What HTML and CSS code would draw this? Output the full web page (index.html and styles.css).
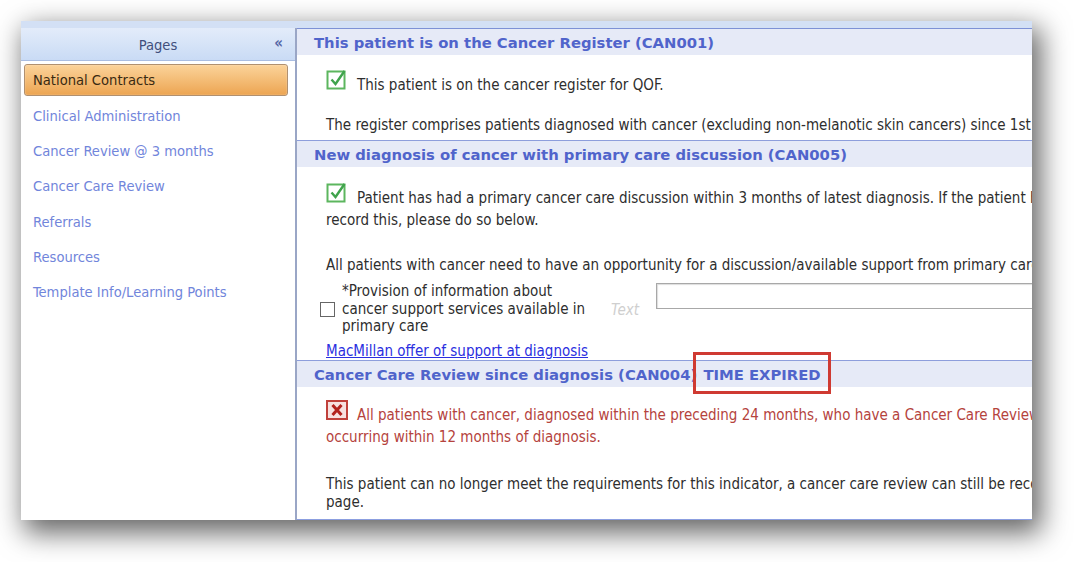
FILE: index.html
```html
<!DOCTYPE html>
<html lang="en">
<head>
    <meta charset="UTF-8">
    <title>National Contracts - Cancer</title>
    <link rel="stylesheet" href="styles.css">
</head>
<body>
    <div class="frame">
        <div class="topband"></div>
        <div class="panes">
            <aside class="sidebar">
                <div class="side-head">
                    <span class="side-title">Pages</span>
                    <span class="collapse">&laquo;</span>
                </div>
                <ul class="nav">
                    <li class="active">National Contracts</li>
                    <li>Clinical Administration</li>
                    <li>Cancer Review @ 3 months</li>
                    <li>Cancer Care Review</li>
                    <li>Referrals</li>
                    <li>Resources</li>
                    <li>Template Info/Learning Points</li>
                </ul>
            </aside>

            <main class="content">
                <section class="sec">
                    <div class="sec-head">This patient is on the Cancer Register (CAN001)</div>
                    <div class="sec-body body-1">
                        <div class="status">
                            <svg class="icon" width="22" height="22" viewBox="0 0 22 22">
                                <rect x="1.5" y="3.5" width="17" height="17" fill="#fff" stroke="#5cb65e" stroke-width="2"/>
                                <path d="M5.5 11.5 L9.5 16 L18.5 3" fill="none" stroke="#3fa34c" stroke-width="2.4"/>
                            </svg>
                            <span>This patient is on the cancer register for QOF.</span>
                        </div>
                        <div class="line gap-22">The register comprises patients diagnosed with cancer (excluding non-melanotic skin cancers) since 1st A</div>
                    </div>
                </section>

                <section class="sec">
                    <div class="sec-head">New diagnosis of cancer with primary care discussion (CAN005)</div>
                    <div class="sec-body body-2">
                        <div class="status">
                            <svg class="icon" width="22" height="22" viewBox="0 0 22 22">
                                <rect x="1.5" y="3.5" width="17" height="17" fill="#fff" stroke="#5cb65e" stroke-width="2"/>
                                <path d="M5.5 11.5 L9.5 16 L18.5 3" fill="none" stroke="#3fa34c" stroke-width="2.4"/>
                            </svg>
                            <span>Patient has had a primary cancer care discussion within 3 months of latest diagnosis. If the patient ha</span>
                        </div>
                        <div class="line gap-4">record this, please do so below.</div>
                        <div class="line gap-27">All patients with cancer need to have an opportunity for a discussion/available support from primary care w</div>
                        <div class="form-row">
                            <span class="tick-box"></span>
                            <label class="form-label">*Provision of information about cancer support services available in primary care</label>
                            <span class="placeholder">Text</span>
                            <input class="text-input" type="text">
                        </div>
                        <div class="line gap-6"><a class="link" href="#">MacMillan offer of support at diagnosis</a></div>
                    </div>
                </section>

                <section class="sec last">
                    <div class="sec-head">Cancer Care Review since diagnosis (CAN004) <span class="expired">TIME EXPIRED</span></div>
                    <div class="sec-body body-3">
                        <div class="status warn">
                            <svg class="icon" width="22" height="20" viewBox="0 0 22 20">
                                <rect x="1" y="1" width="20" height="18" fill="#f7e1e0" stroke="#c0413b" stroke-width="2"/>
                                <path d="M6.5 5 L15.5 15 M15.5 5 L6.5 15" stroke="#b3221d" stroke-width="3"/>
                            </svg>
                            <span>All patients with cancer, diagnosed within the preceding 24 months, who have a Cancer Care Review</span>
                        </div>
                        <div class="line warn gap-4">occurring within 12 months of diagnosis.</div>
                        <div class="line gap-29">This patient can no longer meet the requirements for this indicator, a cancer care review can still be reco</div>
                        <div class="line">page.</div>
                    </div>
                </section>
            </main>
        </div>
    </div>
</body>
</html>
```

FILE: styles.css
```css
body {
    margin: 0;
    min-height: 100vh;
    padding-top: 21px;
    box-sizing: border-box;
    background-color: #fff;
    font-family: "DejaVu Sans Condensed", "DejaVu Sans", sans-serif;
    font-size: 15px;
    color: #2e2e2e;
}
.frame {
    margin-left: 21px;
    width: 1011px;
    height: 499px;
    background-color: #fff;
    box-shadow: 6px 10px 26px 3px rgba(0, 0, 0, 0.6);
    overflow: hidden;
}
.topband {
    height: 7px;
    background-color: #d3e0f5;
}
.panes {
    display: flex;
    height: 492px;
}

/* left pages list */
.sidebar {
    width: 274px;
    flex-shrink: 0;
    border-right: 2px solid #9aa6c6;
    background-color: #fff;
}
.side-head {
    height: 32px;
    border-bottom: 1px solid #a9bde2;
    background: linear-gradient(#e3ecfa, #c9dbf5);
    display: flex;
    align-items: center;
    justify-content: center;
    position: relative;
}
.side-title {
    color: #414f7c;
    font-size: 14.6px;
}
.collapse {
    position: absolute;
    right: 12px;
    top: 6px;
    color: #5567a6;
    font-weight: bold;
    font-size: 15px;
}
.nav {
    list-style: none;
    margin: 0;
    padding: 3px 0 0 0;
    font-size: 14.6px;
}
.nav li {
    height: 35.4px;
    line-height: 35.4px;
    padding-left: 12px;
    color: #7185db;
    white-space: nowrap;
}
.nav li.active {
    height: 30px;
    line-height: 30px;
    margin: 0 7px 1.5px 3px;
    padding-left: 8px;
    border: 1px solid #b09070;
    border-radius: 3px;
    background: linear-gradient(#fbd39a, #eca552);
    color: #3a2a12;
    box-shadow: 0 0 1px #fff inset;
}

/* right content */
.content {
    flex: 1;
    overflow: hidden;
    border-top: 1px solid #7d91d6;
    border-bottom: 1px solid #8c9fe0;
    position: relative;
}
.sec + .sec {
    border-top: 1px solid #8d9edc;
}
.sec-head {
    height: 26px;
    line-height: 28px;
    padding-left: 17px;
    background-color: #e6eaf7;
    color: #5064cb;
    font-family: "DejaVu Sans", sans-serif;
    font-weight: bold;
    font-size: 14.8px;
    white-space: nowrap;
}
.sec-body {
    padding-left: 29px;
    white-space: nowrap;
    overflow: hidden;
}
.body-1 {
    height: 72px;
    padding-top: 13px;
}
.body-2 {
    height: 179px;
    padding-top: 14px;
}
.body-3 {
    padding-top: 13px;
    height: 117px;
}
.status {
    display: flex;
    align-items: baseline;
    line-height: 18px;
}
.status .icon {
    margin-right: 9px;
    flex-shrink: 0;
}
.line {
    line-height: 18px;
}
.warn {
    color: #b5433d;
}
.gap-4 { margin-top: 4px; }
.gap-6 { margin-top: 6px; }
.gap-22 { margin-top: 22px; }
.gap-27 { margin-top: 27px; }
.gap-29 { margin-top: 29px; }

.form-row {
    display: flex;
    align-items: center;
    margin: 9px 0 0 -6px;
    height: 53px;
}
.form-row > * {
    flex-shrink: 0;
}
.tick-box {
    width: 13px;
    height: 13px;
    border: 1px solid #666;
    margin-right: 7px;
}
.form-label {
    width: 250px;
    white-space: normal;
    line-height: 17.5px;
}
.placeholder {
    margin-left: 19px;
    width: 45px;
    color: #cfcfcf;
    font-style: italic;
}
.text-input {
    align-self: flex-start;
    width: 420px;
    height: 24px;
    padding: 0;
    border: 1px solid #a8a8a8;
    box-shadow: 1px 1px 1px #ddd inset;
}
.link {
    color: #2b2fe0;
    text-decoration: underline;
}
.expired {
    display: inline-block;
    position: relative;
    margin-left: 1px;
}
.expired::after {
    content: '';
    position: absolute;
    left: -10px;
    right: -10px;
    top: -9px;
    bottom: -5px;
    border: 3px solid #cf3a32;
}
```
